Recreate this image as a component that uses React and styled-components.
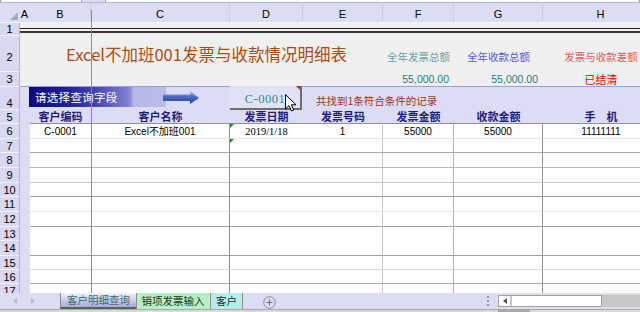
import styled, { createGlobalStyle } from "styled-components";

const COLS = "20px 10px 61px 139px 73px 80px 71px 89px 116px";
const LAV = "#dcdcf2";
const SANS = `"Liberation Sans", "Noto Sans CJK SC", sans-serif`;
const SERIF = `"Liberation Serif", "Noto Sans CJK SC", serif`;
const CJK = `"Noto Sans CJK SC", "Liberation Sans", sans-serif`;

const GlobalStyle = createGlobalStyle`
  html, body {
    margin: 0;
    padding: 0;
    width: 640px;
    height: 312px;
    overflow: hidden;
    background: ${LAV};
  }
  body {
    font-family: ${SANS};
  }
`;

const Frame = styled.div`
  position: relative;
  width: 640px;
  height: 312px;
  overflow: hidden;
  display: flex;
  flex-direction: column;
`;

const TopStrip = styled.div`
  height: 2px;
  flex-shrink: 0;
  display: flex;
  gap: 23px;
  border-bottom: 1px solid #b4b4c4;
`;

const FieldEdge = styled.div`
  width: ${({ $w }) => $w};
  background: #fff;
  border-left: 1px solid #a8a8a8;
  border-right: 1px solid #a8a8a8;
`;

const ColHeader = styled.div`
  display: grid;
  grid-template-columns: ${COLS};
  height: 20px;
  flex-shrink: 0;
  box-sizing: border-box;
  border-bottom: 1px solid #f4f4fc;
`;

const Corner = styled.div`
  display: flex;
  justify-content: flex-end;
  align-items: flex-end;
  padding: 0 2px 2px 0;
`;

const CornerMark = styled.div`
  width: 0;
  height: 0;
  border-left: 8px solid transparent;
  border-bottom: 8px solid #a8a8ba;
`;

const ColLetter = styled.div`
  display: flex;
  align-items: flex-end;
  justify-content: center;
  padding-bottom: 2px;
  box-sizing: border-box;
  font: 11px/12px ${SANS};
  color: #000;
  border-right: 1px solid ${({ $sep }) => $sep || "transparent"};
`;

const Sheet = styled.div`
  height: 270px;
  flex-shrink: 0;
  overflow: hidden;
`;

const Row = styled.div`
  display: grid;
  grid-template-columns: ${COLS};
  height: ${({ $h }) => $h}px;
  background: ${({ $bg }) => $bg || "#fff"};
`;

const RowHead = styled.div`
  display: flex;
  justify-content: center;
  align-items: center;
  padding-top: ${({ $pad }) => $pad || 0}px;
  box-sizing: border-box;
  background: #d8d8f0;
  border-right: 1px solid #b4b4d0;
  border-bottom: 1px solid #f2f2fc;
  font: 11px/12px ${SANS};
  color: #000;
`;

const ColA = styled.div`
  box-sizing: border-box;
  background: ${({ $bg }) => $bg || "#dcdcf4"};
  border-bottom: ${({ $bb }) => ($bb ? `1px solid ${$bb}` : "none")};
`;

const Cell = styled.div`
  position: relative;
  display: flex;
  align-items: ${({ $v }) => $v || "center"};
  justify-content: ${({ $h }) => $h || "center"};
  grid-column: ${({ $span }) => ($span ? `span ${$span}` : "auto")};
  box-sizing: border-box;
  min-width: 0;
  white-space: nowrap;
  border-bottom: ${({ $bb }) => ($bb ? `1px solid ${$bb}` : "none")};
  border-right: ${({ $br }) => ($br ? `1px solid ${$br}` : "none")};
`;

const RuleCell = styled.div`
  grid-column: 2 / -1;
`;

const DoubleRule = styled.div`
  margin-top: 5px;
  height: 2px;
  border-top: 1px solid #1e1e1e;
  border-bottom: 2px solid #383838;
`;

const Title = styled.div`
  padding-bottom: 9px;
  font: 16.5px/18px ${CJK};
  color: #b04a12;
`;

const StatLabel = styled.div`
  padding-bottom: 9px;
  font: 10.5px/12px ${CJK};
  color: ${({ $c }) => $c};
`;

const StatValue = styled.div`
  padding-right: ${({ $pr }) => $pr || 0}px;
  font: ${({ $cjk }) => ($cjk ? `11px/12px ${CJK}` : `10.5px/12px ${SANS}`)};
  color: ${({ $c }) => $c};
`;

const PromptBox = styled.div`
  width: 137px;
  height: 20px;
  margin-left: -1px;
  display: flex;
  align-items: center;
  padding-left: 6px;
  box-sizing: border-box;
  background: linear-gradient(
    90deg,
    #08087e 0%,
    #1c1c96 25%,
    #4848b4 50%,
    #8080d0 72%,
    #9c9cdc 75%,
    #b6b6e8 76%,
    #bcbcec 100%
  );
  font: 11.5px/14px ${CJK};
  color: #fff;
  letter-spacing: 0.3px;
`;

const ArrowSvg = styled.svg`
  margin: 4px 0 0 -3px;
`;

const ValueBox = styled.div`
  position: relative;
  width: 72px;
  height: 24px;
  margin-top: -1px;
  display: flex;
  align-items: center;
  justify-content: center;
  padding-top: 3px;
  box-sizing: border-box;
  background: #e2e2f6;
  border-right: 2px solid #6e6e6e;
  border-bottom: 2px solid #6e6e6e;
  font: 12.5px/14px ${SERIF};
  color: #2a8c9c;
  letter-spacing: 0.5px;

  &::after {
    content: "";
    position: absolute;
    top: 0;
    right: 0;
    border-left: 4px solid transparent;
    border-top: 4px solid #e01010;
  }
`;

const Pointer = styled.svg`
  position: absolute;
  left: 55px;
  top: 8px;
`;

const Note = styled.div`
  padding: 4px 0 0 13px;
  font: 10.5px/12px ${CJK};
  color: #a03212;
`;

const HeadText = styled.div`
  font: bold 11px/13px ${CJK};
  color: #1c1c7c;
`;

const DataText = styled.div`
  font: ${({ $serif }) => ($serif ? `10.5px/12px ${SERIF}` : `10px/12px ${SANS}`)};
  color: #000;
  padding-top: 1px;
`;

const GreenMark = styled.span`
  position: absolute;
  top: 0;
  left: 0;
  border-right: 4px solid transparent;
  border-top: 4px solid #1e8a2a;
`;

const FreezeLine = styled.div`
  position: absolute;
  left: 91px;
  top: 10px;
  bottom: 19px;
  width: 1px;
  background: #8c8c8c;
`;

const TabBar = styled.div`
  height: 16px;
  flex-shrink: 0;
  display: flex;
  background: ${LAV};
`;

const NavArea = styled.div`
  width: 60px;
  display: flex;
  align-items: center;
  gap: 14px;
  padding-left: 13px;
  box-sizing: border-box;
`;

const NavArrow = styled.span`
  width: 0;
  height: 0;
  border-top: 3px solid transparent;
  border-bottom: 3px solid transparent;
  ${({ $dir, $c = "#b8b8cc" }) =>
    $dir === "left" ? `border-right: 4px solid ${$c};` : `border-left: 4px solid ${$c};`}
`;

const Tab = styled.div`
  width: ${({ $w }) => $w}px;
  margin-left: ${({ $ml }) => $ml || 0}px;
  height: 16px;
  display: flex;
  align-items: center;
  justify-content: center;
  box-sizing: border-box;
  background: ${({ $bg }) => $bg};
  border-left: 1px solid #8c8c8c;
  border-right: ${({ $last }) => ($last ? "1px solid #8c8c8c" : "none")};
  border-bottom: ${({ $active }) => ($active ? "2px solid #4c6a5a" : "none")};
  font: 10.5px/12px ${CJK};
  color: ${({ $c }) => $c};
`;

const AddSheet = styled.svg`
  margin: 3px 0 0 20px;
`;

const ScrollArea = styled.div`
  margin-left: auto;
  width: 154px;
  display: flex;
  align-items: center;
`;

const Splitter = styled.div`
  margin-left: 1px;
  width: 2px;
  height: 10px;
  background: repeating-linear-gradient(#9a9a9a 0 2px, transparent 2px 4px);
`;

const ScrollTrack = styled.div`
  margin-left: 9px;
  width: 104px;
  height: 12px;
  display: flex;
  box-sizing: border-box;
  background: #fff;
  border: 1px solid #a0a0a0;
`;

const ScrollButton = styled.div`
  width: 11px;
  display: flex;
  align-items: center;
  justify-content: center;
  border-right: 2px solid #c8c8c8;
`;

const ScrollRest = styled.div`
  width: 38px;
  height: 12px;
  background: #c8c8c8;
`;

const BottomStrip = styled.div`
  height: 3px;
  flex-shrink: 0;
  display: flex;
  padding-left: 498px;
  box-sizing: border-box;
  background: #dadada;
  border-top: 1px solid #a8a8a8;
`;

const Thumb = styled.div`
  width: 32px;
  background: #a8a8a8;
`;

const letters = [
  { l: "A" },
  { l: "B", sep: "#ccccdf" },
  { l: "C", sep: "#ccccdf" },
  { l: "D", sep: "#ccccdf" },
  { l: "E", sep: "#ccccdf" },
  { l: "F", sep: "#ccccdf" },
  { l: "G", sep: "#ccccdf" },
  { l: "H" },
];

const headers = ["客户编码", "客户名称", "发票日期", "发票号码", "发票金额", "收款金额", "手\u3000机"];
const colLines = [null, "#909090", null, "#c8c8c8", "#b4b4b4", "#909090", null];

const dataRows = [
  { n: 6, h: 15, line: "#e4e4e4", mark: true, vals: ["C-0001", "Excel不加班001", "2019/1/18", "1", "55000", "55000", "11111111"] },
  { n: 7, h: 14, line: "#ababab", mark: true },
  { n: 8, h: 15, line: "#b8b8b8" },
  { n: 9, h: 15, line: "#c8c8c8" },
  { n: 10, h: 14, line: "#a0a0a0" },
  { n: 11, h: 15, line: "#e8e8e8" },
  { n: 12, h: 15, line: "#a0a0a0" },
  { n: 13, h: 14, line: null },
  { n: 14, h: 15, line: "#a0a0a0" },
  { n: 15, h: 14, line: "#dadaf2" },
  { n: 16, h: 14, line: "#a8a8a8" },
  { n: 17, h: 14, line: "#a8a8a8" },
];

function Arrow() {
  return (
    <ArrowSvg width="37" height="14" viewBox="0 0 37 14">
      <defs>
        <linearGradient id="arrowFill" x1="0" y1="0" x2="0" y2="1">
          <stop offset="0" stopColor="#b4c4ec" />
          <stop offset="0.45" stopColor="#4a68c4" />
          <stop offset="1" stopColor="#24409c" />
        </linearGradient>
      </defs>
      <polygon points="0,3.5 27,3.5 27,0 36,7 27,13 27,10 0,10" fill="url(#arrowFill)" />
    </ArrowSvg>
  );
}

export default function App() {
  return (
    <Frame>
      <GlobalStyle />
      <TopStrip>
        <FieldEdge $w="80px" />
        <FieldEdge $w="535px" />
      </TopStrip>

      <ColHeader>
        <Corner>
          <CornerMark />
        </Corner>
        {letters.map((c) => (
          <ColLetter key={c.l} $sep={c.sep}>
            {c.l}
          </ColLetter>
        ))}
      </ColHeader>

      <Sheet>
        <Row $h={13} $bg="#f0f0f0">
          <RowHead>1</RowHead>
          <RuleCell>
            <DoubleRule />
          </RuleCell>
        </Row>

        <Row $h={36} $bg="#f0f0f0">
          <RowHead $pad={6}>2</RowHead>
          <ColA $bg="#f0f0f0" />
          <Cell $span={4} $v="flex-end">
            <Title>Excel不加班001发票与收款情况明细表</Title>
          </Cell>
          <Cell $v="flex-end">
            <StatLabel $c="#6aa2a2">全年发票总额</StatLabel>
          </Cell>
          <Cell $v="flex-end">
            <StatLabel $c="#5656dc">全年收款总额</StatLabel>
          </Cell>
          <Cell $v="flex-end">
            <StatLabel $c="#e45a5a">发票与收款差额</StatLabel>
          </Cell>
        </Row>

        <Row $h={15} $bg="#f0f0f0">
          <RowHead>3</RowHead>
          <ColA $bg="#f0f0f0" $bb="#9c9ce4" />
          <Cell $span={4} $bb="#9c9ce4" />
          <Cell $h="flex-end" $bb="#9c9ce4">
            <StatValue $c="#1e8080" $pr={5}>55,000.00</StatValue>
          </Cell>
          <Cell $h="flex-end" $bb="#9c9ce4">
            <StatValue $c="#1e8080" $pr={5}>55,000.00</StatValue>
          </Cell>
          <Cell $bb="#9c9ce4">
            <StatValue $c="#f00000" $cjk>已结清</StatValue>
          </Cell>
        </Row>

        <Row $h={23} $bg="#dcdcf4">
          <RowHead $pad={9}>4</RowHead>
          <ColA />
          <Cell $span={2} $h="flex-start" $v="flex-start">
            <PromptBox>请选择查询字段</PromptBox>
            <Arrow />
          </Cell>
          <Cell $h="flex-start" $v="flex-start">
            <ValueBox>
              C-0001
              <Pointer width="12" height="18" viewBox="0 0 12 18">
                <path d="M0.5 0.5 L0.5 15 L4 11.6 L6.6 17 L8.8 16 L6.3 10.8 L11 10.8 Z" fill="#fff" stroke="#000" strokeWidth="1" strokeLinejoin="round" />
              </Pointer>
            </ValueBox>
          </Cell>
          <Cell $span={4} $h="flex-start">
            <Note>共找到1条符合条件的记录</Note>
          </Cell>
        </Row>

        <Row $h={14} $bg="#dcdcf4">
          <RowHead>5</RowHead>
          <ColA />
          {headers.map((t) => (
            <Cell key={t} $bb="#909090">
              <HeadText>{t}</HeadText>
            </Cell>
          ))}
        </Row>

        {dataRows.map((r) => (
          <Row key={r.n} $h={r.h}>
            <RowHead>{r.n}</RowHead>
            <ColA />
            {colLines.map((br, i) => (
              <Cell key={i} $bb={r.line} $br={br}>
                {r.mark && i === 2 && <GreenMark />}
                {r.vals && <DataText $serif={i === 2}>{r.vals[i]}</DataText>}
              </Cell>
            ))}
          </Row>
        ))}
      </Sheet>

      <TabBar>
        <NavArea>
          <NavArrow $dir="left" />
          <NavArrow $dir="right" />
        </NavArea>
        <Tab $w={76} $active $bg="linear-gradient(#f2f2ff, #c4c4ec 60%, #a8a8dc)" $c="#3c6e5a">
          客户明细查询
        </Tab>
        <Tab $w={73} $bg="#b4f0c4" $c="#203020">
          销项发票输入
        </Tab>
        <Tab $w={33} $ml={1} $last $bg="#b4ecec" $c="#203030">
          客户
        </Tab>
        <AddSheet width="13" height="13" viewBox="0 0 13 13">
          <circle cx="6.5" cy="6.5" r="5.8" fill="none" stroke="#8a8a8a" strokeWidth="1" />
          <path d="M6.5 3.5 V9.5 M3.5 6.5 H9.5" stroke="#6a6a6a" strokeWidth="1" />
        </AddSheet>
        <ScrollArea>
          <Splitter />
          <ScrollTrack>
            <ScrollButton>
              <NavArrow $dir="left" $c="#505050" />
            </ScrollButton>
          </ScrollTrack>
          <ScrollRest />
        </ScrollArea>
      </TabBar>

      <BottomStrip>
        <Thumb />
      </BottomStrip>

      <FreezeLine />
    </Frame>
  );
}
